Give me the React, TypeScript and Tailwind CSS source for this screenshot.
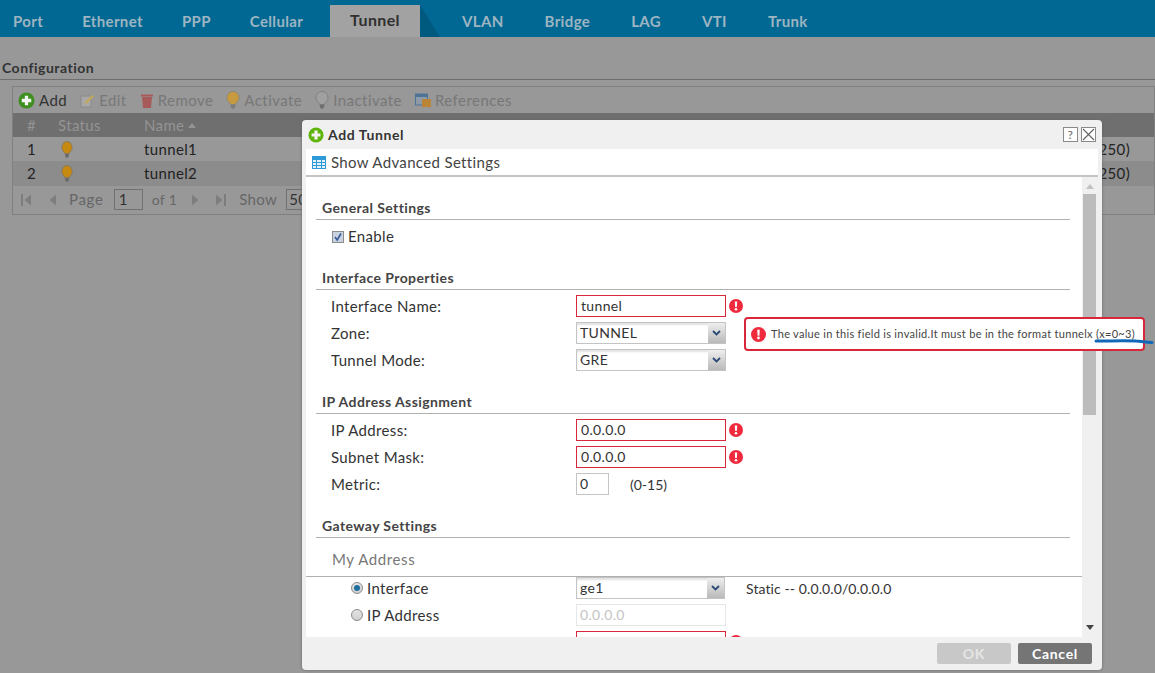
import type { ReactNode } from "react";

const tabs = ["Port", "Ethernet", "PPP", "Cellular"];
const tabsRight = ["VLAN", "Bridge", "LAG", "VTI", "Trunk"];

function PlusIcon({ color, size = 18 }: { color: string; size?: number }) {
  return (
    <svg width={size} height={size} viewBox="0 0 18 18" className="shrink-0">
      <circle cx="9" cy="9" r="8.5" fill={color} />
      <path d="M9 4v10M4 9h10" stroke="#f4f4f4" strokeWidth="3.500" />
    </svg>
  );
}

function Bulb({ color, base, width = 14, height = 18 }: { color: string; base: string; width?: number; height?: number }) {
  return (
    <svg width={width} height={height} viewBox="0 0 14 18" className="shrink-0" preserveAspectRatio="none">
      <path d="M7 .5a6.200 6.200 0 0 0-3.400 11.300c.7.6 1 1.200 1 1.700h4.800c0-.5.300-1.100 1-1.700A6.200 6.200 0 0 0 7 .5z" fill={color} stroke={base} strokeWidth=".6" />
      <path d="M4.800 13.500h4.400v2.500l-1.200 1.700h-2l-1.200-1.700z" fill={base} />
    </svg>
  );
}

function ErrorIcon({ size = 15 }: { size?: number }) {
  return (
    <svg width={size} height={size} viewBox="0 0 15 15" className="shrink-0">
      <circle cx="7.500" cy="7.500" r="7.500" fill="#ee2a3c" />
      <path d="M6.200 2.800h2.600l-.4 5.900h-1.800z" fill="#fff" />
      <circle cx="7.500" cy="11" r="1.400" fill="#fff" />
    </svg>
  );
}

function PagerIcon({ dir, bar }: { dir: "left" | "right"; bar?: boolean }) {
  const flip = dir === "right" ? "translate(12 0) scale(-1 1)" : undefined;
  return (
    <svg width="12" height="14" viewBox="0 0 12 14" className="shrink-0">
      <g transform={flip}>
        {bar && <rect x="1" y="1" width="2" height="12" fill="#7d7d7d" />}
        <path d="M11 1.500v11L4.500 7z" fill="#7d7d7d" />
      </g>
    </svg>
  );
}

function ToolItem({ icon, label, dark }: { icon: ReactNode; label: string; dark?: boolean }) {
  return (
    <div className="flex items-center gap-[4px]">
      {icon}
      <span className={dark ? "text-[#333]" : "text-[#777]"}>{label}</span>
    </div>
  );
}

function Heading({ children }: { children: ReactNode }) {
  return (
    <div className="mt-5 ml-[10px] w-[754px] h-[23px] border-b border-[#b0b0b0] pl-[6px] text-[14px] leading-[22px] font-bold tracking-[0.4px] text-[#444]">
      {children}
    </div>
  );
}

function Row({ label, children, mt = "mt-[5px]" }: { label: ReactNode; children: ReactNode; mt?: string }) {
  return (
    <div className={`${mt} ml-[25px] flex h-[22px] items-center`}>
      <span className="flex w-[245px] shrink-0 items-center text-[#333]">{label}</span>
      {children}
    </div>
  );
}

function ErrorInput({ value }: { value: string }) {
  return (
    <>
      <div className="h-[22px] w-[150px] border border-[#d8263a] bg-white pl-[4px] text-[14px] leading-[20px] text-[#333]">{value}</div>
      <span className="ml-[3px]"><ErrorIcon size={14} /></span>
    </>
  );
}

function Select({ value, width = "w-[150px]" }: { value: string; width?: string }) {
  return (
    <div className={`flex h-[22px] ${width} border border-[#c4c4c4] bg-white shadow-[inset_0_2px_2px_#e2e2e2]`}>
      <span className="flex-1 pl-[3px] text-[14px] leading-[20px] text-[#333]">{value}</span>
      <span className="flex w-[17px] items-center justify-center bg-gradient-to-b from-[#efefef] to-[#b9b9b9]">
        <svg width="9" height="6" viewBox="0 0 9 6">
          <path d="M1 1l3.500 3.500L8 1" fill="none" stroke="#2b4a78" strokeWidth="1.800" />
        </svg>
      </span>
    </div>
  );
}

function Radio({ on, label }: { on?: boolean; label: string }) {
  return (
    <span className="flex items-center pl-[20px]">
      <span className="mr-[4px] flex h-[12px] w-[12px] shrink-0 items-center justify-center rounded-full border border-[#8c8c8c] bg-gradient-to-b from-[#e4e4e4] to-[#cfcfcf]">
        {on && <span className="h-[6px] w-[6px] rounded-full bg-[#1d6f9e]" />}
      </span>
      {label}
    </span>
  );
}

export default function App() {
  return (
    <div className="relative h-[673px] w-[1155px] overflow-hidden bg-[#989898] font-['Lato',sans-serif] text-[15px] tracking-[0.35px]">
      {/* tab bar */}
      <div className="flex h-[37px] items-end bg-[#006893] pl-[13px] text-[15px] font-bold text-[#9db5c2]">
        <div className="flex h-[32px] w-[317px] gap-[39px] leading-[32px]">
          {tabs.map((t) => (
            <span key={t}>{t}</span>
          ))}
        </div>
        <div className="relative h-[32px] w-[90px] bg-[#a2a2a2] text-center text-[16px] leading-[30px] text-[#303030]">
          Tunnel
          <span className="absolute left-full top-0 h-0 w-0 border-b-[32px] border-r-[20px] border-b-[#005a80] border-r-transparent" />
        </div>
        <div className="ml-[42px] flex h-[32px] gap-[41px] leading-[32px]">
          {tabsRight.map((t) => (
            <span key={t}>{t}</span>
          ))}
        </div>
      </div>

      {/* configuration behind the dialog */}
      <div className="mt-[21px] border-b border-[#6e6e6e] pb-[2px] pl-[2px] text-[14px] font-bold leading-[19px] tracking-[0.5px] text-[#333]">
        Configuration
      </div>
      <div className="ml-[12px] mt-[6px] h-[129px] border border-[#808080] text-[#333]">
        <div className="flex h-[26px] items-center gap-[13px] pl-[5px] tracking-[0.45px]">
          <ToolItem dark icon={<PlusIcon color="#3f8f20" size={17} />} label="Add" />
          <ToolItem icon={<svg width="15" height="15" viewBox="0 0 15 15"><rect x="1" y="3" width="10" height="11" fill="#a8a8a8" stroke="#8a8a8a" /><path d="M5 9l7-7 2 1.500-7 7-2.500.5z" fill="#c0a860" /></svg>} label="Edit" />
          <ToolItem icon={<svg width="14" height="15" viewBox="0 0 14 15"><path d="M2 4h10l-1 11H3z" fill="#a85a5a" /><rect x="1" y="1.500" width="12" height="2" fill="#a85a5a" /></svg>} label="Remove" />
          <ToolItem icon={<Bulb color="#c79a3f" base="#7c7c7c" />} label="Activate" />
          <ToolItem icon={<Bulb color="#a0a0a0" base="#707070" />} label="Inactivate" />
          <ToolItem icon={<svg width="16" height="15" viewBox="0 0 16 15"><rect x="0.500" y="1" width="12" height="11" fill="#8d9aa8" stroke="#4e7396" /><rect x="0.500" y="1" width="12" height="3" fill="#4e7396" /><rect x="7" y="6" width="9" height="8" fill="#b98436" /></svg>} label="References" />
        </div>
        <div className="flex h-[24px] items-center bg-[#6f6f6f] text-[#949494]">
          <span className="w-[45px] pl-[14px]">#</span>
          <span className="w-[86px]">Status</span>
          <span>Name</span>
          <span className="ml-[4px] h-0 w-0 border-x-[4px] border-b-[5px] border-x-transparent border-b-[#949494]" />
        </div>
        <div className="flex h-[24px] items-center text-[#222]">
          <span className="w-[48px] pl-[14px]">1</span>
          <span className="w-[83px]"><Bulb color="#c68a12" base="#6b6b6b" width={12} height={17} /></span>
          <span>tunnel1</span>
          <span className="ml-auto mr-[24px]">250)</span>
        </div>
        <div className="flex h-[25px] items-center bg-[#8c8c8c] text-[#222]">
          <span className="w-[48px] pl-[14px]">2</span>
          <span className="w-[83px]"><Bulb color="#c68a12" base="#6b6b6b" width={12} height={17} /></span>
          <span>tunnel2</span>
          <span className="ml-auto mr-[24px]">250)</span>
        </div>
        <div className="flex h-[27px] items-center text-[#666]">
          <span className="ml-[7px]"><PagerIcon dir="left" bar /></span>
          <span className="ml-[13px]"><PagerIcon dir="left" /></span>
          <span className="ml-[12px] tracking-[0.7px]">Page</span>
          <span className="ml-[10px] h-[21px] w-[29px] border border-[#707070] pl-[4px] leading-[19px] text-[#333]">1</span>
          <span className="ml-[9px] text-[14px]">of 1</span>
          <span className="ml-[14px]"><PagerIcon dir="right" /></span>
          <span className="ml-[12px]"><PagerIcon dir="right" bar /></span>
          <span className="ml-[12px]">Show</span>
          <span className="ml-[9px] h-[21px] w-[40px] border border-[#707070] pl-[2px] leading-[19px] text-[#333]">50</span>
        </div>
      </div>

      {/* dialog */}
      <div className="absolute left-[302px] top-[120px] flex h-[550px] w-[800px] flex-col rounded-[4px] bg-[#f0f0f0] shadow-[0_0_3px_#666]">
        <div className="flex h-[29px] shrink-0 items-center pl-[6px] pr-[6px] text-[14px] font-bold tracking-[0.6px] text-[#333]">
          <PlusIcon color="#5fb40a" size={16} />
          <span className="ml-[4px]">Add Tunnel</span>
          <div className="ml-auto flex items-center gap-[3px]">
            <span className="flex h-[15px] w-[15px] items-center justify-center border border-[#8a8a8a] bg-white text-[12px] font-normal text-[#666]">?</span>
            <span className="flex h-[15px] w-[15px] items-center justify-center border border-[#8a8a8a] bg-white">
              <svg width="13" height="13" viewBox="0 0 13 13"><path d="M1 1l11 11M12 1L1 12" stroke="#666" strokeWidth="1.200" /></svg>
            </span>
          </div>
        </div>
        <div className="mx-[4px] flex h-[28px] shrink-0 items-center border-b-2 border-[#c4c4c4] bg-white pl-[6px] text-[#444]">
          <svg width="14" height="13" viewBox="0 0 14 13" className="mr-[5px]">
            <rect width="14" height="13" fill="#2f9ad8" />
            <path d="M1 4h3v2H1zM5 4h4v2H5zM10 4h3v2h-3zM1 7h3v2H1zM5 7h4v2H5zM10 7h3v2h-3zM1 10h3v2H1zM5 10h4v2H5zM10 10h3v2h-3z" fill="#e4f2fb" />
          </svg>
          Show Advanced Settings
        </div>
        <div className="flex min-h-0 flex-1">
          <div className="ml-[4px] w-[776px] overflow-hidden bg-white">
            <Heading>General Settings</Heading>
            <div className="ml-[26px] mt-[7px] flex h-[19px] items-center text-[#333]">
              <span className="mr-[4px] flex h-[12px] w-[12px] items-center justify-center border border-[#8c8c8c] bg-[#c9d2e0]">
                <svg width="10" height="10" viewBox="0 0 10 10"><path d="M2 5l2.200 3L8 1.500" fill="none" stroke="#3a5a9a" strokeWidth="1.600" /></svg>
              </span>
              Enable
            </div>
            <div className="h-[1px]" />
            <Heading>Interface Properties</Heading>
            <Row label="Interface Name:"><ErrorInput value="tunnel" /></Row>
            <Row label="Zone:"><Select value="TUNNEL" /></Row>
            <Row label="Tunnel Mode:"><Select value="GRE" /></Row>
            <Heading>IP Address Assignment</Heading>
            <Row label="IP Address:"><ErrorInput value="0.0.0.0" /></Row>
            <Row label="Subnet Mask:"><ErrorInput value="0.0.0.0" /></Row>
            <Row label="Metric:">
              <div className="h-[22px] w-[33px] border border-[#c4c4c4] pl-[3px] text-[14px] leading-[20px] text-[#333]">0</div>
              <span className="ml-[21px] text-[14px] tracking-normal text-[#333]">(0-15)</span>
            </Row>
            <Heading>Gateway Settings</Heading>
            <div className="flex h-[39px] items-center border-b border-[#b0b0b0] pl-[26px] pt-[5px] tracking-[0.6px] text-[#777]">My Address</div>
            <Row label={<Radio on label="Interface" />} mt="mt-0">
              <Select value="ge1" width="w-[149px]" />
              <span className="ml-[21px] whitespace-nowrap text-[14px] tracking-[0.1px] text-[#333]">Static -- 0.0.0.0/0.0.0.0</span>
            </Row>
            <Row label={<Radio label="IP Address" />}>
              <div className="h-[22px] w-[150px] border border-[#e6e6e6] pl-[3px] text-[14px] leading-[20px] text-[#c4c4c4]">0.0.0.0</div>
            </Row>
            <Row label=""><ErrorInput value="" /></Row>
          </div>
          {/* scrollbar */}
          <div className="relative w-[16px] bg-[#f0f0f0]">
            <span className="absolute left-[4px] top-[7px] h-0 w-0 border-x-[4px] border-b-[5px] border-x-transparent border-b-[#c2c2c2]" />
            <span className="absolute left-[1px] top-[17px] h-[221px] w-[13px] bg-[#bcbcbc]" />
            <span className="absolute bottom-[7px] left-[4px] h-0 w-0 border-x-[4px] border-t-[5px] border-x-transparent border-t-[#444]" />
          </div>
        </div>
        <div className="flex h-[33px] shrink-0 items-center justify-end gap-[7px] pr-[10px] text-[14px] font-bold tracking-[0.7px]">
          <span className="flex h-[21px] w-[74px] items-center justify-center rounded-[2px] bg-[#c8c8c8] text-[#e6e6e6]">OK</span>
          <span className="flex h-[21px] w-[74px] items-center justify-center rounded-[2px] bg-[#757575] text-white">Cancel</span>
        </div>
      </div>

      {/* validation tooltip */}
      <div className="absolute left-[744px] top-[317px] flex h-[34px] w-[401px] items-center rounded-[4px] border-2 border-[#d8263a] bg-white pl-[5px] text-[11px] tracking-[0.3px] text-[#444]">
        <ErrorIcon />
        <span className="ml-[5px] whitespace-nowrap">The value in this field is invalid.It must be in the format tunnelx (x=0~3)</span>
      </div>
      {/* hand-drawn underline */}
      <svg className="absolute left-[1094px] top-[337px]" width="61" height="10" viewBox="0 0 61 10">
        <path d="M2 4c14 0 28-.5 40 0 5 0 10 1.500 16 1.500" fill="none" stroke="#1167b8" strokeWidth="3" strokeLinecap="round" />
      </svg>
    </div>
  );
}
